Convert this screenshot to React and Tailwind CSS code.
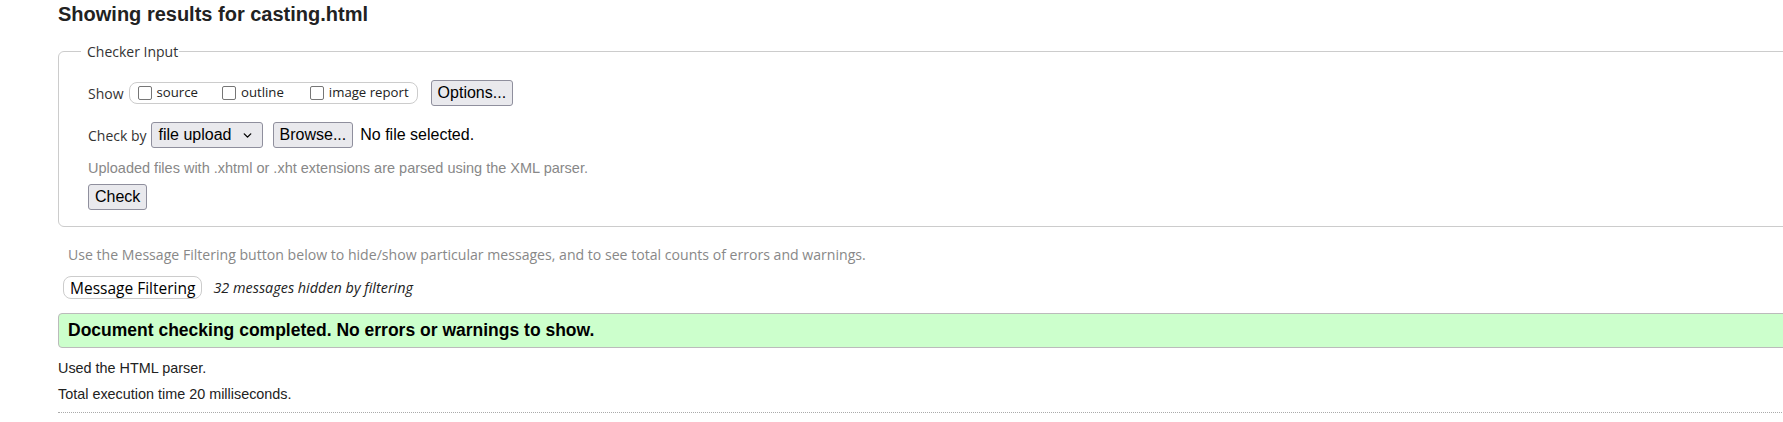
import React from 'react';
import { ChevronDown } from 'lucide-react';

const ui = "font-['Open_Sans',sans-serif]";
const arial = "font-['Liberation_Sans',Arial,sans-serif]";
const btn = `${arial} inline-flex items-center h-[26px] px-[6px] text-[16px] text-black bg-[#e9e9ed] border border-[#8f8f9d] rounded-[3px]`;

function Box({ label, className = '' }) {
  return (
    <label className={`flex items-center gap-[5px] ${className}`}>
      <span className="w-[14px] h-[14px] border border-[#767676] rounded-[2px] bg-white" />
      <span>{label}</span>
    </label>
  );
}

export default function App() {
  return (
    <div className={`${arial} h-[422px] w-full overflow-hidden bg-white text-[#222]`}>
      <div className="w-[1800px] pl-[58px]">
        <h2 className="pt-[3px] text-[20px] leading-[23px] font-bold text-[#222]">
          Showing results for casting.html
        </h2>

        <fieldset className="mt-[16px] border border-[#cccccc] rounded-[6px] pl-[22px] pb-[16px]">
          <legend className={`${ui} pl-[6px] pr-[1px] text-[14px] leading-[19px] text-[#333]`}>
            Checker Input
          </legend>
          <div className="pl-[7px] pt-[19px]">
            <div className={`${ui} flex items-center h-[26px] text-[14px] text-[#333]`}>
              <span>Show</span>
              <div className="ml-[5px] flex items-center h-[22px] pl-[8px] pr-[8px] border border-[#cccccc] rounded-[8px] text-[13.2px] text-[#222]">
                <Box label="source" />
                <Box label="outline" className="ml-[24px]" />
                <Box label="image report" className="ml-[26px]" />
              </div>
              <button className={`${btn} ml-[13px] h-[24px]`}>Options...</button>
            </div>

            <div className={`${ui} flex items-center h-[26px] mt-[16px] text-[14px] text-[#333]`}>
              <span>Check by</span>
              <div className={`${btn} ml-[4px] w-[112px] pl-[7px] justify-between pr-[8px]`}>
                <span>file upload</span>
                <ChevronDown size={13} strokeWidth={2.5} />
              </div>
              <button className={`${btn} ml-[10px] h-[25px]`}>Browse...</button>
              <span className={`${arial} ml-[7px] text-[16px] text-black`}>No file selected.</span>
            </div>

            <p className="mt-[12px] text-[14.5px] leading-[16px] text-[#888]">
              Uploaded files with .xhtml or .xht extensions are parsed using the XML parser.
            </p>

            <div className="mt-[8px]">
              <button className={btn}>Check</button>
            </div>
          </div>
        </fieldset>

        <p className={`${ui} mt-[19px] ml-[10px] text-[14.1px] leading-[18px] text-[#888]`}>
          Use the Message Filtering button below to hide/show particular messages, and to see total counts of errors and warnings.
        </p>

        <div className={`${ui} mt-[12px] ml-[5px] flex items-center`}>
          <button className="h-[23px] px-[6px] text-[15.5px] leading-[20px] text-black bg-white border border-[#cccccc] rounded-[8px]">
            Message Filtering
          </button>
          <span className="ml-[11px] text-[14.4px] italic text-[#222]">32 messages hidden by filtering</span>
        </div>

        <div className="mt-[14px] h-[35px] flex items-center pl-[9px] bg-[#ccffcc] border border-[#bbbbbb] rounded-[4px]">
          <p className="text-[17.5px] font-bold text-black">
            Document checking completed. No errors or warnings to show.
          </p>
        </div>

        <p className="mt-[12px] text-[14.4px] leading-[16px] text-[#222]">Used the HTML parser.</p>
        <p className="mt-[10px] text-[14.4px] leading-[16px] text-[#222]">Total execution time 20 milliseconds.</p>
        <div className="mt-[10px] border-t border-dotted border-[#aaaaaa]" />
      </div>
    </div>
  );
}
